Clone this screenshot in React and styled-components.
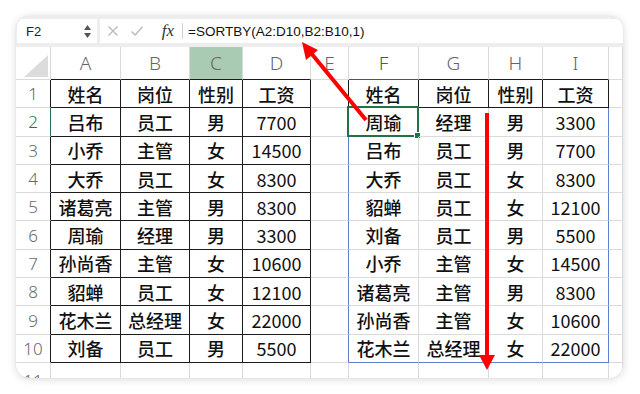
import React from 'react';
import styled, { createGlobalStyle } from 'styled-components';

const Global = createGlobalStyle`
  html, body { margin: 0; padding: 0; background: #fff; }
  body { width: 640px; height: 394px; overflow: hidden; font-family: "Noto Sans CJK SC", "Noto Sans", sans-serif; }
`;

const DARK = '#1c1c1c';
const LIGHT = '#dadada';
const BLUE = '#5a7fcc';
const GREEN = '#217346';

const Page = styled.div`
  position: relative;
  width: 640px;
  height: 394px;
  box-sizing: border-box;
  padding: 16px 17px 16px 16px;
`;

const Card = styled.div`
  height: 362px;
  border-radius: 14px;
  background: #ededed;
  box-shadow: 0 1px 9px rgba(0, 0, 0, 0.16), 0 0 1px rgba(0, 0, 0, 0.12);
  overflow: hidden;
  display: flex;
  flex-direction: column;
`;

const FormulaBar = styled.div`
  height: 28px;
  box-sizing: border-box;
  padding: 3px 0 1px 1px;
  display: flex;
  gap: 3px;
  flex: none;
`;

const NameBox = styled.div`
  width: 80px;
  background: #fff;
  display: flex;
  align-items: center;
  justify-content: space-between;
  padding: 0 6px 0 9px;
  box-sizing: border-box;
  font-family: "Liberation Sans", Arial, sans-serif;
  font-size: 13px;
  color: #222;
`;

const Spinner = styled.div`
  display: flex;
  flex-direction: column;
  gap: 3px;
`;

const FormulaArea = styled.div`
  flex: 1;
  background: #fff;
  display: flex;
  align-items: center;
  padding-left: 1px;
`;

const IconSlot = styled.div`
  width: ${p => p.$w}px;
  display: flex;
  align-items: center;
  justify-content: center;
`;

const Fx = styled.span`
  font-family: "Liberation Serif", "DejaVu Serif", serif;
  font-style: italic;
  font-size: 17px;
  color: #333;
  width: 26px;
  margin-left: 6px;
  text-align: center;
`;

const Sep = styled.div`
  width: 1px;
  height: 16px;
  background: #d0d0d0;
  margin: 0 5px 0 1px;
`;

const Formula = styled.span`
  font-family: "Liberation Sans", Arial, sans-serif;
  font-size: 13.5px;
  color: #111;
`;

const Strip = styled.div`
  height: 3px;
  flex: none;
`;

const Grid = styled.div`
  flex: 1;
  display: grid;
  grid-template-columns: 35px 70px 69px 53px 68px 38px 70px 70px 54px 66px 1fr;
  grid-template-rows: 33px repeat(10, 28.3px) 1fr;
  background: #fff;
`;

const Cell = styled.div`
  position: relative;
  box-sizing: border-box;
  border-right: 1px solid ${p => p.$r};
  border-bottom: 1px solid ${p => p.$b};
  display: flex;
  align-items: center;
  justify-content: center;
  font-size: 18px;
  font-weight: ${p => (p.$num ? 400 : 500)};
  color: #111;
  white-space: nowrap;
  overflow: visible;
`;

const ColHead = styled(Cell)`
  background: ${p => (p.$hl ? '#a9cab3' : '#fff')};
  color: ${p => (p.$active ? GREEN : '#666')};
  font-family: "Noto Sans", sans-serif;
  font-weight: 300;
  font-size: 19px;
`;

const RowHead = styled(Cell)`
  color: ${p => (p.$active ? GREEN : '#6a6a6a')};
  font-family: "Noto Sans", sans-serif;
  font-weight: 300;
  font-size: 17px;
  align-items: ${p => (p.$cut ? 'flex-start' : 'center')};
  padding-top: ${p => (p.$cut ? '6px' : '0')};
`;

const Corner = styled(Cell)`
  align-items: flex-end;
  justify-content: flex-end;
  padding: 0 2px 2px 0;
`;

const Selection = styled.div`
  position: absolute;
  inset: -2px -1px -1px -2px;
  border: 2px solid ${GREEN};
  pointer-events: none;
`;

const Handle = styled.div`
  position: absolute;
  right: -4px;
  bottom: -4px;
  width: 5px;
  height: 5px;
  background: ${GREEN};
  border: 1px solid #fff;
`;

const Overlay = styled.svg`
  position: absolute;
  left: 0;
  top: 0;
  pointer-events: none;
`;

const header = ['姓名', '岗位', '性别', '工资'];
const left = [
  header,
  ['吕布', '员工', '男', '7700'],
  ['小乔', '主管', '女', '14500'],
  ['大乔', '员工', '女', '8300'],
  ['诸葛亮', '主管', '男', '8300'],
  ['周瑜', '经理', '男', '3300'],
  ['孙尚香', '主管', '女', '10600'],
  ['貂蝉', '员工', '女', '12100'],
  ['花木兰', '总经理', '女', '22000'],
  ['刘备', '员工', '男', '5500'],
];
const right = [
  header,
  ['周瑜', '经理', '男', '3300'],
  ['吕布', '员工', '男', '7700'],
  ['大乔', '员工', '女', '8300'],
  ['貂蝉', '员工', '女', '12100'],
  ['刘备', '员工', '男', '5500'],
  ['小乔', '主管', '女', '14500'],
  ['诸葛亮', '主管', '男', '8300'],
  ['孙尚香', '主管', '女', '10600'],
  ['花木兰', '总经理', '女', '22000'],
];

const COLS = ['A', 'B', 'C', 'D', 'E', 'F', 'G', 'H', 'I', ''];

function cellValue(r, c) {
  if (r > 10) return '';
  if (c <= 3) return left[r - 1][c];
  if (c >= 5 && c <= 8) return right[r - 1][c - 5];
  return '';
}

function rightColor(r, c) {
  if (r > 10) return LIGHT;
  if (c <= 3) return DARK;
  if (c === 4) return r === 1 ? DARK : BLUE;
  if (c >= 5 && c <= 8) {
    if (r === 1) return DARK;
    return c === 8 ? BLUE : LIGHT;
  }
  return LIGHT;
}

function bottomColor(r, c) {
  if (r > 10) return LIGHT;
  if (c <= 3) return DARK;
  if (c >= 5 && c <= 8) {
    if (r === 1) return DARK;
    if (r === 10) return BLUE;
  }
  return LIGHT;
}

function Cross() {
  return (
    <svg width="12" height="12" viewBox="0 0 12 12">
      <path d="M1.5 1.5 L10.5 10.5 M10.5 1.5 L1.5 10.5" stroke="#b8b8b8" strokeWidth="1.3" fill="none" />
    </svg>
  );
}

function Check() {
  return (
    <svg width="14" height="12" viewBox="0 0 14 12">
      <path d="M1.5 6.5 L5.2 10 L12.5 1.8" stroke="#b8b8b8" strokeWidth="1.3" fill="none" />
    </svg>
  );
}

function Arrows() {
  return (
    <Overlay width="640" height="394" viewBox="0 0 640 394">
      <line x1="366" y1="120" x2="311" y2="53" stroke="#ff0000" strokeWidth="4" strokeLinecap="butt" />
      <polygon points="302,42 318,50 306,60" fill="#ff0000" />
      <line x1="487" y1="113" x2="487" y2="356" stroke="#ff0000" strokeWidth="4" />
      <polygon points="479,355 495,355 487,370" fill="#ff0000" />
    </Overlay>
  );
}

export default function App() {
  const rows = [];
  for (let r = 1; r <= 11; r++) {
    rows.push(
      <RowHead
        key={`rh${r}`}
        $r={r === 2 ? GREEN : r <= 10 ? DARK : LIGHT}
        $b={LIGHT}
        $active={r === 2}
        $cut={r === 11}
      >
        {r}
      </RowHead>
    );
    for (let c = 0; c < 10; c++) {
      const sel = r === 2 && c === 5;
      const v = cellValue(r, c);
      rows.push(
        <Cell
          key={`c${r}-${c}`}
          $r={rightColor(r, c)}
          $b={bottomColor(r, c)}
          $num={/^\d+$/.test(v)}
        >
          {v}
          {sel && (
            <Selection>
              <Handle />
            </Selection>
          )}
        </Cell>
      );
    }
  }

  return (
    <Page>
      <Global />
      <Card>
        <FormulaBar>
          <NameBox>
            <span>F2</span>
            <Spinner>
              <svg width="7" height="5" viewBox="0 0 7 5"><polygon points="3.5,0 7,5 0,5" fill="#555" /></svg>
              <svg width="7" height="5" viewBox="0 0 7 5"><polygon points="0,0 7,0 3.5,5" fill="#555" /></svg>
            </Spinner>
          </NameBox>
          <FormulaArea>
            <IconSlot $w={24}><Cross /></IconSlot>
            <IconSlot $w={24}><Check /></IconSlot>
            <Fx>fx</Fx>
            <Sep />
            <Formula>=SORTBY(A2:D10,B2:B10,1)</Formula>
          </FormulaArea>
        </FormulaBar>
        <Strip />
        <Grid>
          <Corner $r={LIGHT} $b={LIGHT}>
            <svg width="24" height="22" viewBox="0 0 24 22"><polygon points="24,0 24,22 0,22" fill="#dcdcdc" /></svg>
          </Corner>
          {COLS.map((l, i) => (
            <ColHead
              key={`h${i}`}
              $hl={i === 2}
              $active={i === 5}
              $r={LIGHT}
              $b={i <= 3 ? DARK : i === 5 ? GREEN : i >= 6 && i <= 8 ? DARK : LIGHT}
            >
              {l}
            </ColHead>
          ))}
          {rows}
        </Grid>
      </Card>
      <Arrows />
    </Page>
  );
}
